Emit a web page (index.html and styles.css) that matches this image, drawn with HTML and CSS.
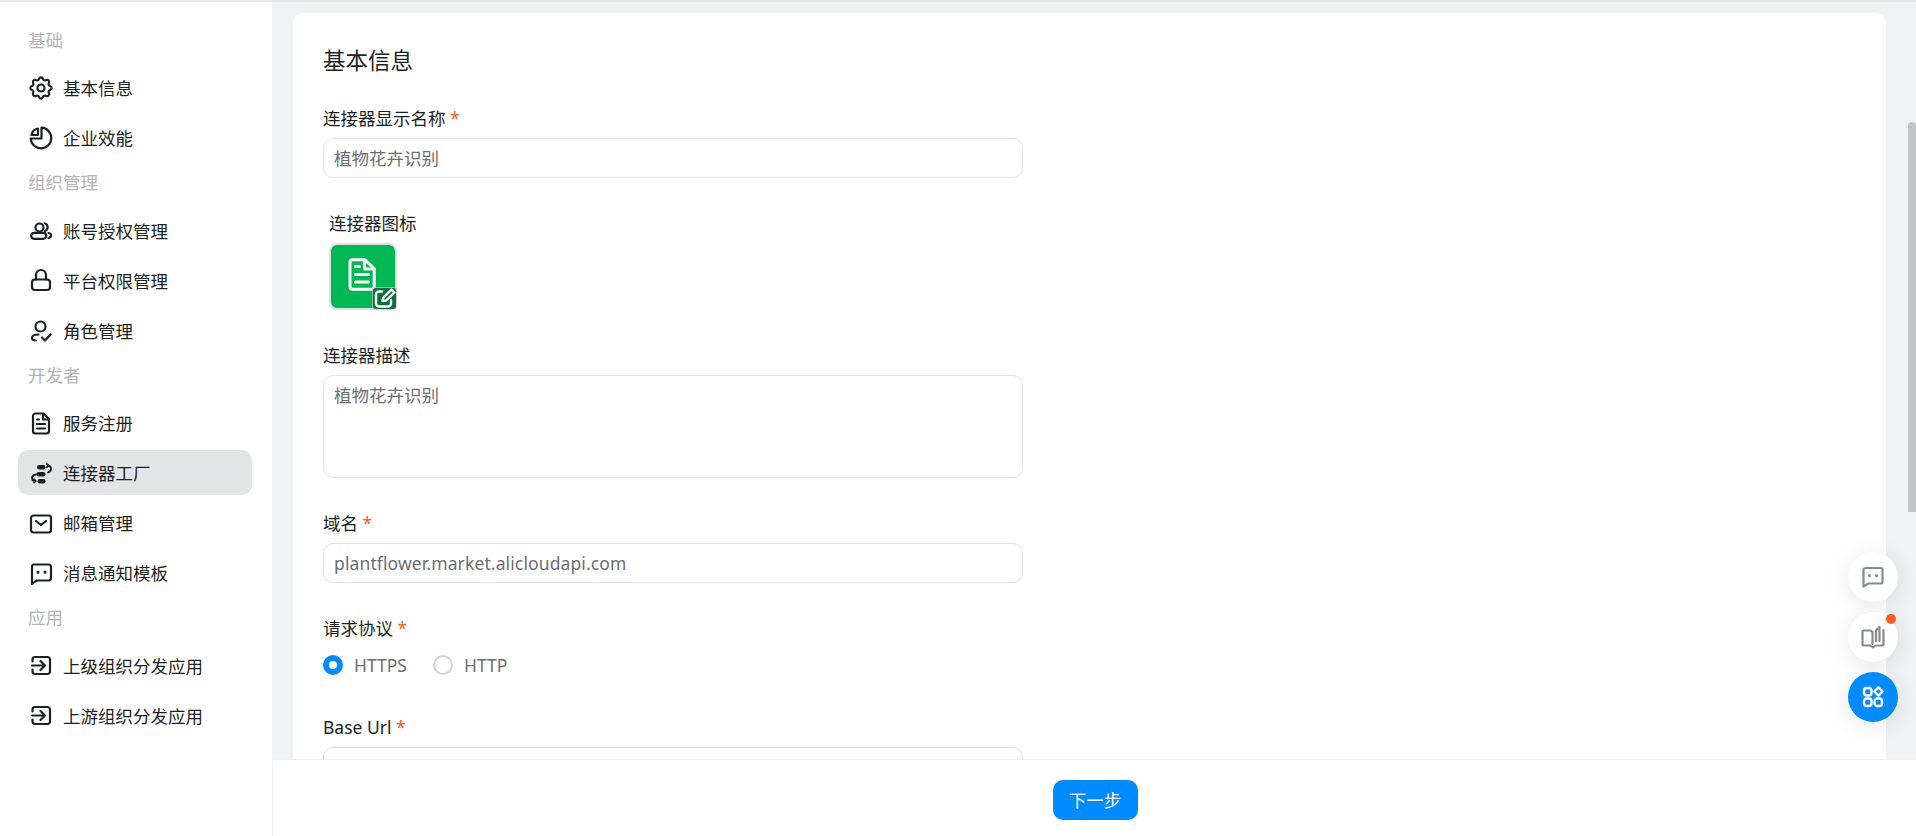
FILE: index.html
```html
<!DOCTYPE html>
<html lang="zh-CN">
<head>
<meta charset="utf-8">
<title>连接器工厂</title>
<link rel="stylesheet" href="styles.css">
</head>
<body>
<div class="app">
  <aside class="sidebar">
    <div class="group">基础</div>
    <a class="item"><svg class="ico" viewBox="0 0 24 24"><g transform="translate(-2.2 -2.2) scale(1.183)" class="gear"><path d="M10.325 4.317c.426-1.756 2.924-1.756 3.35 0a1.724 1.724 0 0 0 2.573 1.066c1.543-.94 3.31.826 2.37 2.37a1.724 1.724 0 0 0 1.065 2.572c1.756.426 1.756 2.924 0 3.35a1.724 1.724 0 0 0-1.066 2.573c.94 1.543-.826 3.31-2.37 2.37a1.724 1.724 0 0 0-2.572 1.065c-.426 1.756-2.924 1.756-3.35 0a1.724 1.724 0 0 0-2.573-1.066c-1.543.94-3.31-.826-2.37-2.37a1.724 1.724 0 0 0-1.065-2.572c-1.756-.426-1.756-2.924 0-3.35a1.724 1.724 0 0 0 1.066-2.573c-.94-1.543.826-3.31 2.37-2.37c1 .608 2.296.07 2.572-1.065z"/><circle cx="12" cy="12" r="3"/></g></svg><span>基本信息</span></a>
    <a class="item"><svg class="ico" viewBox="0 0 24 24"><path d="M12.500 1.700A10.300 10.300 0 1 1 1.700 12.500H12.500z"/><path d="M9 2.500A8 8 0 0 0 2.500 9H9z"/></svg><span>企业效能</span></a>
    <div class="group">组织管理</div>
    <a class="item"><svg class="ico" viewBox="0 0 24 24"><circle cx="10.500" cy="9.500" r="4"/><path d="M16 5.500a4 4 0 0 1 0 7.500"/><rect x="2.200" y="14.800" width="15" height="6" rx="3"/><path d="M19.500 15c1.800.4 2.700 1.200 2.700 2.500 0 1.200-1 2-2.700 2.500"/></svg><span>账号授权管理</span></a>
    <a class="item"><svg class="ico" viewBox="0 0 24 24"><path d="M7 11.500V7a5 5 0 0 1 10 0v4.500"/><rect x="3" y="11.500" width="18" height="10.500" rx="3"/></svg><span>平台权限管理</span></a>
    <a class="item"><svg class="ico" viewBox="0 0 24 24"><circle cx="11.500" cy="8.500" r="5"/><path d="M9.500 16.500C5 16.500 3 18 3 20c0 1.500 1.500 2.500 4 2.500"/><path d="M13 19.500l3 3 5.500-6"/></svg><span>角色管理</span></a>
    <div class="group">开发者</div>
    <a class="item"><svg class="ico" viewBox="0 0 24 24"><path d="M6.500 2.500h8l5.500 5.500v12a2.500 2.500 0 0 1-2.500 2.500h-11A2.500 2.500 0 0 1 4 20V5a2.500 2.500 0 0 1 2.500-2.500z"/><path d="M14 3v5.500h5.500M8 8.500h2M8 13h8M8 17.500h8"/></svg><span>服务注册</span></a>
    <a class="item active"><svg class="ico" viewBox="0 0 24 24"><rect class="fill" x="8" y="4" width="8.500" height="4.500" rx="2.200"/><rect class="fill" x="7.500" y="11" width="9" height="4.500" rx="2.200"/><rect class="fill" x="8.500" y="18" width="8" height="4.500" rx="2.200"/><path class="thin" d="M19 4.500c2 .3 3 1.500 3 3.200 0 2-1.200 3.300-3 3.800M7 13.500c-2.700.4-4 1.800-4 3.500 0 1.900 1.200 3 3.500 3M17.800 2.800l1.700 1.700-1.700 1.700M5 18.300l1.700 1.700L5 21.700"/></svg><span>连接器工厂</span></a>
    <a class="item"><svg class="ico" viewBox="0 0 24 24"><rect x="2" y="4.500" width="20" height="17" rx="2.500"/><path d="M7 10l5 4 5-4"/></svg><span>邮箱管理</span></a>
    <a class="item"><svg class="ico" viewBox="0 0 24 24"><path d="M5 3.500h14.500a2.500 2.500 0 0 1 2.500 2.500v11a2.500 2.500 0 0 1-2.500 2.500H7.500L3 23V5.500a2 2 0 0 1 2-2z"/><path class="thick" d="M9 11v.2M16 11v.2"/></svg><span>消息通知模板</span></a>
    <div class="group">应用</div>
    <a class="item"><svg class="ico" viewBox="0 0 24 24"><path d="M3.500 8.500V6.500A2.500 2.500 0 0 1 6 4h12.500A2.500 2.500 0 0 1 21 6.500v12a2.500 2.500 0 0 1-2.500 2.500H6a2.500 2.500 0 0 1-2.500-2.500V16.500"/><path d="M3 12.500h12.500M11.500 8l4.500 4.500-4.500 4.500"/></svg><span>上级组织分发应用</span></a>
    <a class="item"><svg class="ico" viewBox="0 0 24 24"><path d="M3.500 8.500V6.500A2.500 2.500 0 0 1 6 4h12.500A2.500 2.500 0 0 1 21 6.500v12a2.500 2.500 0 0 1-2.500 2.500H6a2.500 2.500 0 0 1-2.500-2.500V16.500"/><path d="M3 12.500h12.500M11.500 8l4.500 4.500-4.500 4.500"/></svg><span>上游组织分发应用</span></a>
  </aside>

  <main class="main">
    <div class="scroll">
      <section class="card">
        <h2 class="title">基本信息</h2>
        <div class="field">
          <label class="label">连接器显示名称 <i>*</i></label>
          <div class="input">植物花卉识别</div>
        </div>
        <div class="field icon-field">
          <label class="label">连接器图标</label>
          <div class="logo">
            <svg class="doc" viewBox="0 0 28 33"><path d="M4.500 1.800h12.500l9.200 8.700v18.200a2.500 2.500 0 0 1-2.500 2.500H4.500a2.500 2.500 0 0 1-2.500-2.500V4.300a2.500 2.500 0 0 1 2.500-2.500z"/><path d="M16.500 2v9h9.500M7.500 8.500h4M7.500 16.500h13M7.500 24h13"/></svg>
            <span class="edit"><svg viewBox="0 0 24 22"><path d="M9 4.500H6A3 3 0 0 0 3 7.500v9A3 3 0 0 0 6 19.500h9a3 3 0 0 0 3-3V13"/><path d="M9.500 14l.6-3.200L18.500 2.500l3 3-8.500 8z"/></svg></span>
          </div>
        </div>
        <div class="field">
          <label class="label">连接器描述</label>
          <div class="input area">植物花卉识别</div>
        </div>
        <div class="field">
          <label class="label">域名 <i>*</i></label>
          <div class="input latin">plantflower.market.alicloudapi.com</div>
        </div>
        <div class="field">
          <label class="label">请求协议 <i>*</i></label>
          <div class="radios">
            <span class="radio on"><b></b>HTTPS</span>
            <span class="radio"><b></b>HTTP</span>
          </div>
        </div>
        <div class="field">
          <label class="label">Base Url <i>*</i></label>
          <div class="input"></div>
        </div>
      </section>
    </div>
    <footer class="footer"><button class="next">下一步</button></footer>
  </main>
</div>
<div class="thumb"></div>
<div class="floats">
  <div class="fab"><svg viewBox="0 0 24 24"><path d="M4.500 3h15A2 2 0 0 1 21.500 5v11.500a2 2 0 0 1-2 2H7.500l-5 3V5a2 2 0 0 1 2-2z"/><path class="thick" d="M8.500 10.500v.2M15.500 10.500v.2"/></svg></div>
  <div class="fab"><svg viewBox="0 0 24 24"><path d="M9 5.500H3a1.500 1.500 0 0 0-1.500 1.500v12A1.500 1.500 0 0 0 3 20.500h6.500L12 22.500l2.500-2h6.500a1.500 1.500 0 0 0 1.500-1.500V5M9 5.500c1.500 0 2.500 1 2.500 2.500v11"/><path d="M15 16V5.500L18.500 2v14"/></svg><em class="dot"></em></div>
  <div class="fab blue"><svg viewBox="0 0 24 24"><rect x="3" y="3" width="7.500" height="7.500" rx="2.800"/><path d="M17.500 2.300l4.200 4.200-4.200 4.200-4.200-4.200z"/><rect x="3" y="13.500" width="7.500" height="7.500" rx="2.800"/><rect x="13.500" y="13.500" width="7.500" height="7.500" rx="2.800"/></svg></div>
</div>
</body>
</html>
```

FILE: styles.css
```css
* { box-sizing: border-box; }
html, body { margin: 0; height: 100%; overflow: hidden; }
body {
  font-family: "Noto Sans", "Noto Sans CJK SC", sans-serif;
  font-size: 17.5px;
  color: #1c1f23;
  background: #fff;
  border-top: 2px solid #e6e7e9;
}
.app { display: flex; height: 834px; }
.sidebar {
  width: 272px;
  flex: none;
  padding: 20.75px 20px 0 18px;
  background: #fff;
}
.group {
  height: 35px;
  line-height: 35px;
  margin-bottom: 7.5px;
  padding-left: 10px;
  color: #b2b3b5;
  font-size: 17.5px;
}
.item {
  display: flex;
  align-items: center;
  gap: 10.5px;
  height: 45px;
  margin-bottom: 5px;
  padding-left: 10.5px;
  border-radius: 10px;
}
.item.active { background: #e3e4e6; }
.ico { width: 24px; height: 24px; flex: none; fill: none; stroke: #1c1f23; stroke-width: 2.2; stroke-linecap: round; stroke-linejoin: round; }
.ico .fill { fill: #1c1f23; stroke: none; }
.ico .gear { stroke-width: 1.8; }
.ico .thin { stroke-width: 1.8; }
.ico .thick, .fab .thick { stroke-width: 3; }
.main { flex: 1; min-width: 0; display: flex; flex-direction: column; background: #f0f1f3; }
.scroll { flex: 1; min-height: 0; overflow: hidden; padding: 11px 30px 0 21px; }
.card {
  background: #fff;
  border-radius: 10px 10px 0 0;
  padding: 32px 30px 0;
  min-height: 800px;
}
.title { margin: 0 0 30px; font-size: 22.5px; line-height: 31px; font-weight: 400; color: #1c1f23; }
.field { margin-bottom: 33px; width: 700px; }
.label { display: block; line-height: 25px; margin-bottom: 7px; }
.label i { color: #ff5a1f; font-style: normal; }
.input {
  height: 40px;
  line-height: 38px;
  padding: 0 10px;
  border: 1px solid #e2e3e5;
  border-radius: 10px;
  color: #6b6e72;
  background: #fff;
}
.input.latin { letter-spacing: .12px; }
.input.area { height: 103px; line-height: 30px; padding-top: 4px; }
.icon-field { padding-left: 6px; }
.logo {
  position: relative;
  width: 68px;
  height: 67px;
  border: 2px solid #dfe1e3;
  border-radius: 8px;
  background: #00b853;
  display: flex;
  align-items: center;
  justify-content: center;
}
.doc { width: 28px; height: 33px; margin: 0 3px 4px 0; fill: none; stroke: #fff; stroke-width: 3; stroke-linejoin: round; stroke-linecap: round; }
.edit {
  position: absolute;
  right: -1px;
  bottom: -1px;
  width: 23px;
  height: 21px;
  background: #0b6f3a;
  border-radius: 3px;
  display: flex;
  box-shadow: 0 0 0 1px rgba(190,200,195,.7);
}
.edit svg { width: 24px; height: 22px; flex: none; margin-top: -1px; fill: none; stroke: #fff; stroke-width: 2.4; stroke-linejoin: round; stroke-linecap: round; }
.radios { display: flex; gap: 26px; height: 34px; align-items: center; margin-top: 2px; }
.radio { display: flex; align-items: center; gap: 11px; color: #6b6e72; }
.radio b { width: 20px; height: 20px; border-radius: 50%; border: 2px solid #cfd1d4; }
.radio.on b { border: 6px solid #008cff; }
.footer {
  height: 77px;
  flex: none;
  background: #fff;
  border-top: 1px solid #eeeff0;
  border-left: 1px solid #eeeff0;
  display: flex;
  justify-content: center;
  align-items: center;
  padding-top: 3px;
  padding-left: 1px;
}
.next {
  width: 85px;
  height: 40px;
  border: 0;
  border-radius: 10px;
  background: #008cff;
  color: #fff;
  font: inherit;
}
.thumb {
  position: fixed;
  top: 122px;
  right: 0;
  width: 8px;
  height: 390px;
  background: #c1c3c5;
  border-radius: 4px 4px 0 0;
}
.floats { position: fixed; left: 1848px; top: 552px; display: flex; flex-direction: column; gap: 10px; }
.fab {
  position: relative;
  width: 50px;
  height: 50px;
  border-radius: 50%;
  background: #fff;
  box-shadow: 0 4px 24px rgba(0,0,0,.1);
  display: flex;
  align-items: center;
  justify-content: center;
}
.fab svg { width: 24px; height: 24px; fill: none; stroke: #858a90; stroke-width: 2.2; stroke-linejoin: round; stroke-linecap: round; }
.fab.blue { background: #008cff; }
.fab.blue svg { stroke: #fff; stroke-width: 2.4; }
.dot { position: absolute; top: 2px; right: 2px; width: 10px; height: 10px; border-radius: 50%; background: #ff5a1f; }
```
